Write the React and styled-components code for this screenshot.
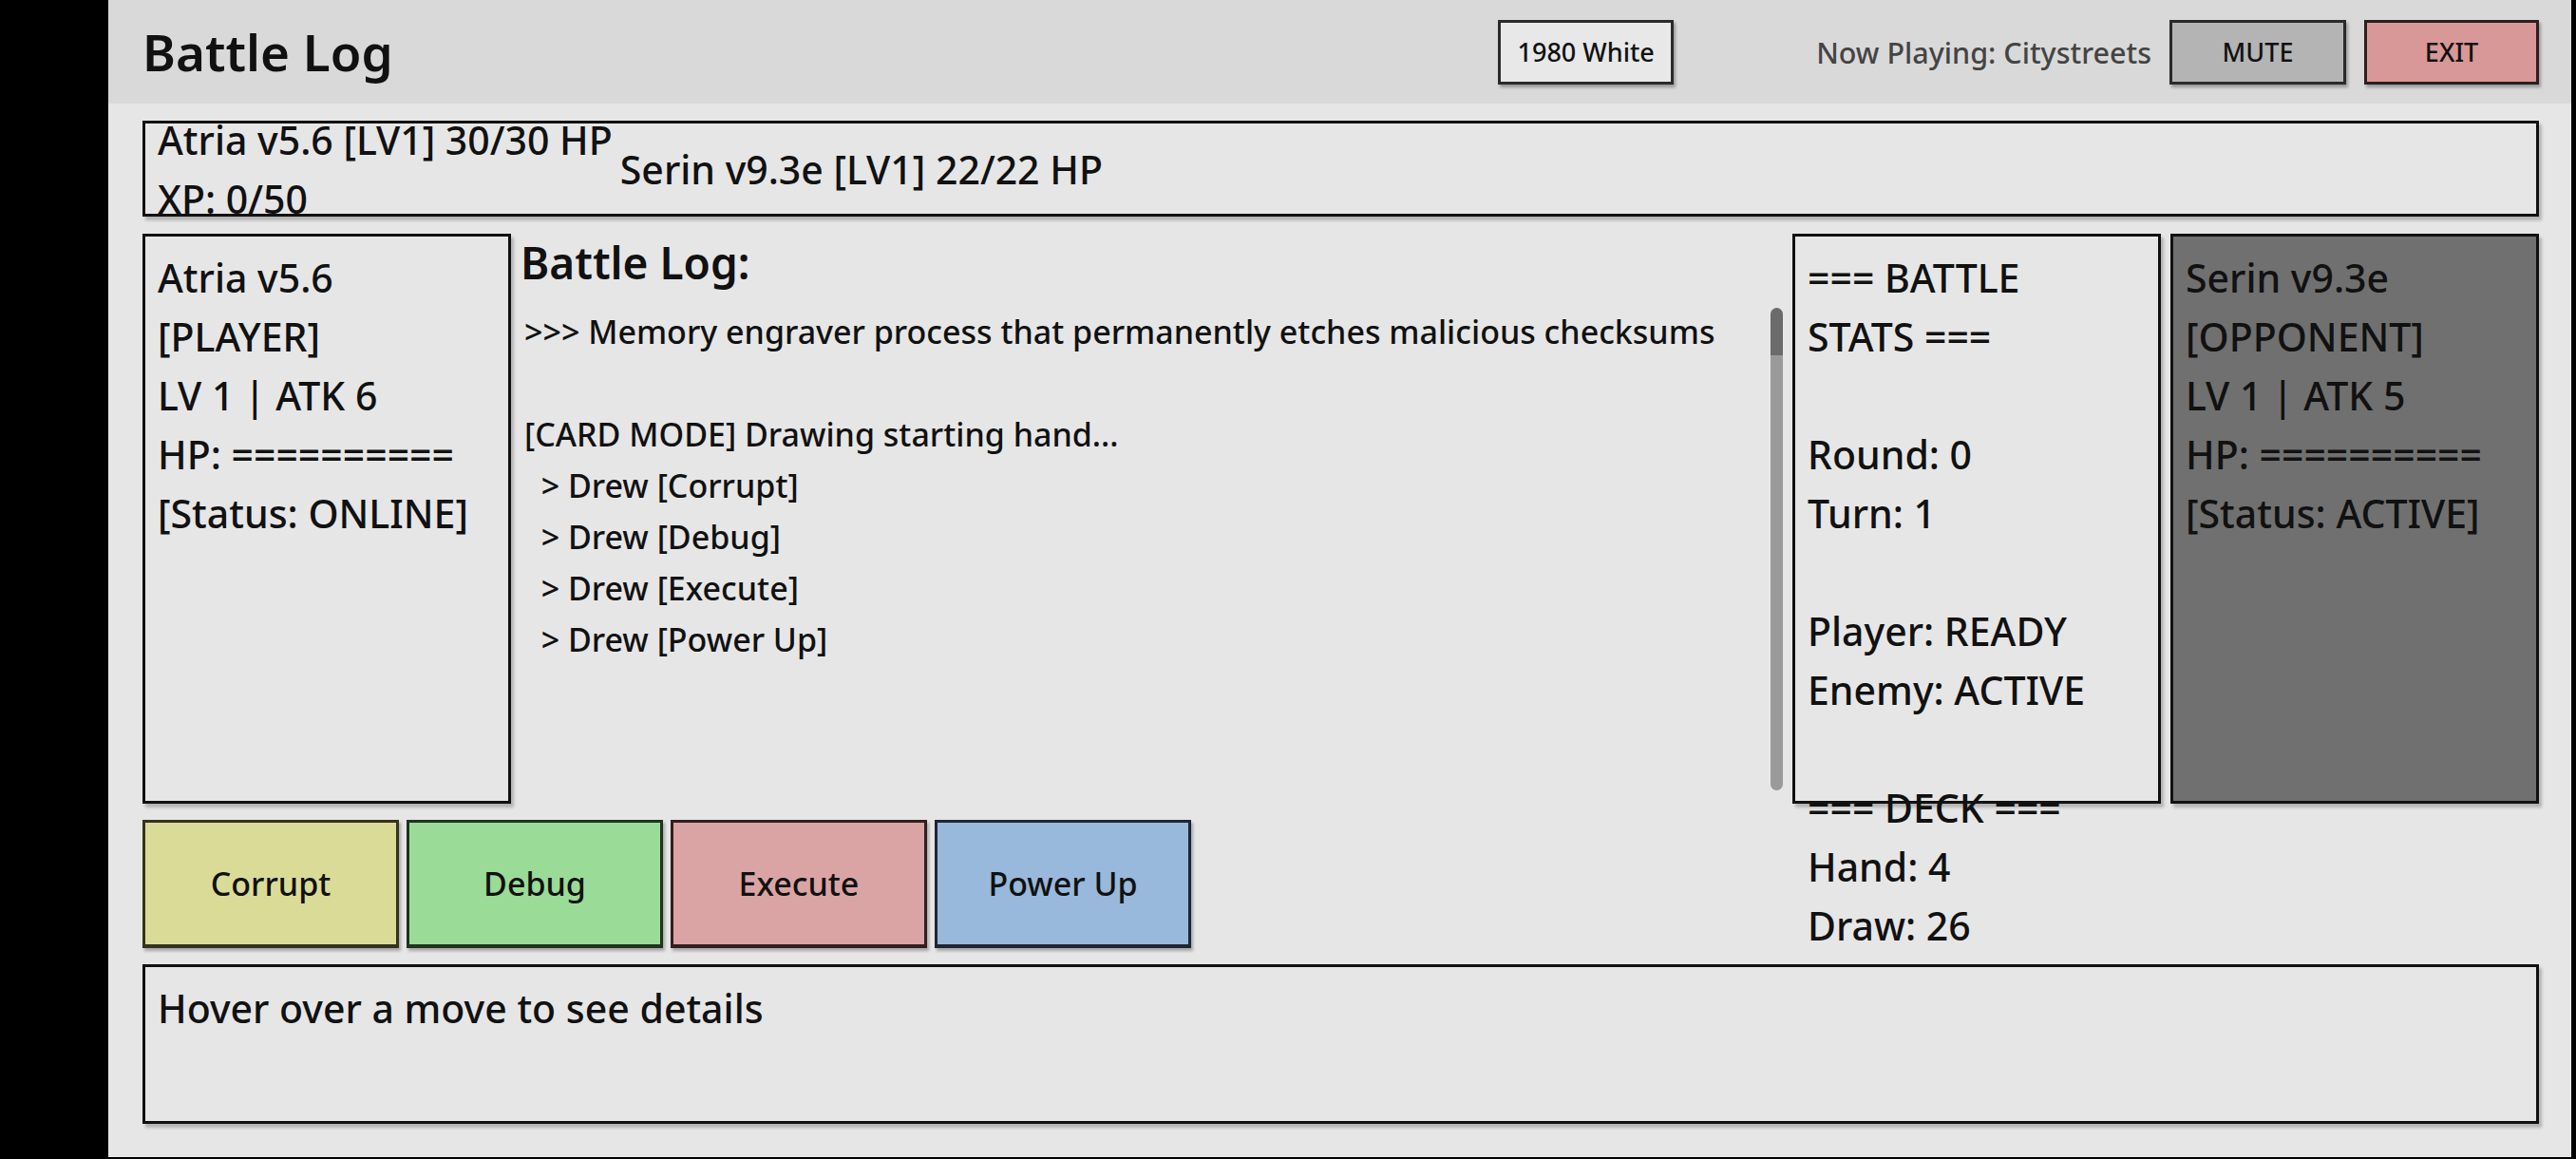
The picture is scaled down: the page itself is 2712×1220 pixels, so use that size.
import React from "react";
import styled, { createGlobalStyle } from "styled-components";

const GlobalStyle = createGlobalStyle`
  html, body {
    margin: 0;
    padding: 0;
    background: #000;
  }
  body {
    font-family: "Noto Sans", "Open Sans", sans-serif;
    font-weight: 500;
    color: #111;
  }
`;

const Screen = styled.div`
  margin-left: 114px;
  width: 2593px;
  height: 1218px;
  background: #e6e6e6;
  display: flex;
  flex-direction: column;
  overflow: hidden;
`;

const TopBar = styled.header`
  height: 109px;
  flex-shrink: 0;
  background: #d9d9d9;
  display: flex;
  align-items: center;
  padding: 0 34px 0 36px;
`;

const Title = styled.h1`
  margin: 0;
  font-size: 53px;
  font-weight: 600;
  flex: 1;
`;

const BarButton = styled.button`
  height: 68px;
  width: ${p => p.w || 186}px;
  border: 3px solid ${p => p.edge || "#2a2a2a"};
  background: ${p => p.bg || "#e8e8e8"};
  box-shadow: 2px 3px 3px rgba(0, 0, 0, 0.3);
  font-family: inherit;
  font-size: 27px;
  font-weight: 500;
  color: #111;
  padding: 0;
  margin-left: ${p => p.ml || 0}px;
`;

const NowPlaying = styled.span`
  margin-left: 150px;
  margin-right: 19px;
  font-size: 30.5px;
  color: #444;
`;

const Body = styled.main`
  flex: 1;
  display: flex;
  flex-direction: column;
  padding: 18px 34px 0 36px;
`;

const HpBar = styled.div`
  height: 101px;
  flex-shrink: 0;
  box-sizing: border-box;
  border: 3px solid #111;
  box-shadow: 3px 4px 3px rgba(0, 0, 0, 0.22);
  display: flex;
  align-items: center;
  padding: 0 13px;
  font-size: 41px;
  line-height: 62px;
  gap: 8px;
`;

const Arena = styled.section`
  margin-top: 18px;
  height: 600px;
  flex-shrink: 0;
  display: grid;
  grid-template-columns: 388px 1fr 388px 388px;
  grid-template-rows: 600px;
  gap: 10px;
`;

const Panel = styled.div`
  box-sizing: border-box;
  min-height: 0;
  border: 3px solid #111;
  background: ${p => (p.dark ? "#707070" : "#e6e6e6")};
  box-shadow: 3px 4px 3px rgba(0, 0, 0, 0.22);
  padding: 12px 30px 12px 13px;
  font-size: 41px;
  line-height: 62px;
  white-space: pre-wrap;
`;

const LogColumn = styled.div`
  display: flex;
  flex-direction: column;
  min-width: 0;
  min-height: 0;
`;

const LogHeading = styled.h2`
  margin: 0 0 16px;
  font-size: 46px;
  line-height: 60px;
  font-weight: 600;
`;

const LogScroll = styled.div`
  flex: 1;
  display: flex;
  min-height: 0;
`;

const LogText = styled.div`
  flex: 1;
  padding: 0 4px;
  font-size: 34px;
  line-height: 54px;
  white-space: pre-wrap;
  overflow: hidden;
`;

const ScrollTrack = styled.div`
  width: 13px;
  margin: 2px 0 14px;
  border-radius: 7px;
  background: #9a9a9a;
  overflow: hidden;
`;

const ScrollThumb = styled.div`
  height: 50px;
  background: #6b6b6b;
  border-radius: 7px 7px 0 0;
`;

const Hand = styled.div`
  margin-top: 17px;
  height: 135px;
  flex-shrink: 0;
  display: flex;
  gap: 8px;
`;

const Card = styled.button`
  width: 270px;
  height: 135px;
  border: 3px solid ${p => p.edge};
  border-bottom-width: 4px;
  background: ${p => p.bg};
  box-shadow: 2px 3px 3px rgba(0, 0, 0, 0.28);
  font-family: inherit;
  font-size: 34px;
  font-weight: 500;
  color: #111;
  padding: 0;
`;

const Details = styled.div`
  margin-top: 17px;
  height: 168px;
  flex-shrink: 0;
  box-sizing: border-box;
  border: 3px solid #111;
  box-shadow: 3px 4px 3px rgba(0, 0, 0, 0.22);
  padding: 12px 13px;
  font-size: 41px;
  line-height: 62px;
`;

const cards = [
  { name: "Corrupt", bg: "#dbdb98", edge: "#33331f" },
  { name: "Debug", bg: "#9adb98", edge: "#1f331f" },
  { name: "Execute", bg: "#dba4a4", edge: "#331f1f" },
  { name: "Power Up", bg: "#98b9db", edge: "#1f2633" }
];

const log = [
  ">>> Memory engraver process that permanently etches malicious checksums",
  "",
  "[CARD MODE] Drawing starting hand...",
  "  > Drew [Corrupt]",
  "  > Drew [Debug]",
  "  > Drew [Execute]",
  "  > Drew [Power Up]"
].join("\n");

const stats = [
  "=== BATTLE STATS ===",
  "",
  "Round: 0",
  "Turn: 1",
  "",
  "Player: READY",
  "Enemy: ACTIVE",
  "",
  "=== DECK ===",
  "Hand: 4",
  "Draw: 26"
].join("\n");

export default function App() {
  return (
    <>
      <GlobalStyle />
      <Screen>
        <TopBar>
          <Title>Battle Log</Title>
          <BarButton w={185}>1980 White</BarButton>
          <NowPlaying>Now Playing: Citystreets</NowPlaying>
          <BarButton bg="#b4b4b4">MUTE</BarButton>
          <BarButton bg="#d89898" edge="#2e1e1e" w={184} ml={19}>
            EXIT
          </BarButton>
        </TopBar>
        <Body>
          <HpBar>
            <div>
              Atria v5.6 [LV1] 30/30 HP
              <br />
              XP: 0/50
            </div>
            <div>Serin v9.3e [LV1] 22/22 HP</div>
          </HpBar>
          <Arena>
            <Panel>{"Atria v5.6\n[PLAYER]\nLV 1 | ATK 6\nHP: ==========\n[Status: ONLINE]"}</Panel>
            <LogColumn>
              <LogHeading>Battle Log:</LogHeading>
              <LogScroll>
                <LogText>{log}</LogText>
                <ScrollTrack>
                  <ScrollThumb />
                </ScrollTrack>
              </LogScroll>
            </LogColumn>
            <Panel>{stats}</Panel>
            <Panel dark>{"Serin v9.3e\n[OPPONENT]\nLV 1 | ATK 5\nHP: ==========\n[Status: ACTIVE]"}</Panel>
          </Arena>
          <Hand>
            {cards.map(c => (
              <Card key={c.name} bg={c.bg} edge={c.edge}>
                {c.name}
              </Card>
            ))}
          </Hand>
          <Details>Hover over a move to see details</Details>
        </Body>
      </Screen>
    </>
  );
}
